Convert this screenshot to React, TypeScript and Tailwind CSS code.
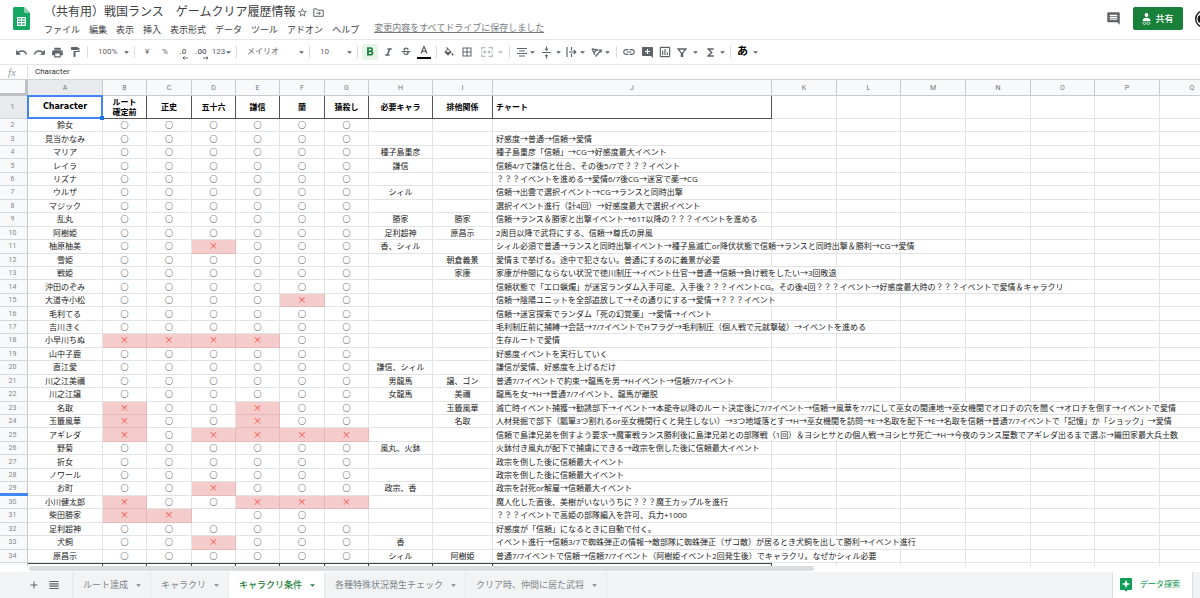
import type { ReactNode } from 'react';
import {
  MdAdd,
  MdBorderAll,
  MdComment,
  MdFormatBold,
  MdFormatItalic,
  MdFormatPaint,
  MdFunctions,
  MdLink,
  MdOutlineInsertChart,
  MdPrint,
  MdRedo,
  MdStarBorder,
  MdStrikethroughS,
  MdUndo,
  MdVerticalAlignCenter,
  MdViewHeadline,
} from 'react-icons/md';

type Row = { name: string; marks: string; need?: string; rival?: string; chart?: string };

// marks: one letter per route column, o = cleared, x = impossible, - = empty
const rows: Row[] = [
  { name: '鈴女', marks: 'oooooo' },
  { name: '見当かなみ', marks: 'oooooo', chart: '好感度→普通→信頼→愛情' },
  { name: 'マリア', marks: 'oooooo', need: '種子島重彦', chart: '種子島重彦「信頼」→CG→好感度最大イベント' },
  { name: 'レイラ', marks: 'oooooo', need: '謙信', chart: '信頼4/7で謙信と仕合、その後5/7で？？？イベント' },
  { name: 'リズナ', marks: 'oooooo', chart: '？？？イベントを進める→愛情6/7後CG→迷宮で薬→CG' },
  { name: 'ウルザ', marks: 'oooooo', need: 'シィル', chart: '信頼→出雲で選択イベント→CG→ランスと同時出撃' },
  { name: 'マジック', marks: 'oooooo', chart: '選択イベント進行（計4回）→好感度最大で選択イベント' },
  { name: '乱丸', marks: 'oooooo', need: '勝家', rival: '勝家', chart: '信頼→ランス＆勝家と出撃イベント→61T以降の？？？イベントを進める' },
  { name: '阿樹姫', marks: 'oooooo', need: '足利超神', rival: '原昌示', chart: '2周目以降で武将にする、信頼→尊氏の屏風' },
  { name: '柚原柚美', marks: 'ooxooo', need: '香、シィル', chart: 'シィル必須で普通→ランスと同時出撃イベント→種子島滅亡or降伏状態で信頼→ランスと同時出撃＆勝利→CG→愛情' },
  { name: '雪姫', marks: 'oooooo', rival: '朝倉義景', chart: '愛情まで挙げる。途中で犯さない。普通にするのに義景が必要' },
  { name: '戦姫', marks: 'oooooo', rival: '家康', chart: '家康が仲間にならない状況で徳川制圧→イベント仕官→普通→信頼→負け戦をしたい→3回敗退' },
  { name: '沖田のぞみ', marks: 'oooooo', chart: '信頼状態で「エロ蝋燭」が迷宮ランダム入手可能、入手後？？？イベントCG。その後4回？？？イベント→好感度最大時の？？？イベントで愛情＆キャラクリ' },
  { name: '大道寺小松', marks: 'ooooxo', chart: '信頼→陰陽ユニットを全部追放して→その通りにする→愛情→？？？イベント' },
  { name: '毛利てる', marks: 'oooooo', chart: '信頼→迷宮探索でランダム「死の幻覚薬」→愛情→イベント' },
  { name: '吉川きく', marks: 'oooooo', chart: '毛利制圧前に捕縛→会話→7/7イベントでHフラグ→毛利制圧（個人戦で元就撃破）→イベントを進める' },
  { name: '小早川ちぬ', marks: 'xxxxoo', chart: '生存ルートで愛情' },
  { name: '山中子鹿', marks: 'oooooo', chart: '好感度イベントを実行していく' },
  { name: '直江愛', marks: 'oooooo', need: '謙信、シィル', chart: '謙信が愛情、好感度を上げるだけ' },
  { name: '川之江美禰', marks: 'oooooo', need: '男龍馬', rival: '譲、ゴン', chart: '普通7/7イベントで約束→龍馬を男→Hイベント→信頼7/7イベント' },
  { name: '川之江譲', marks: 'oooooo', need: '女龍馬', rival: '美禰', chart: '龍馬を女→H→普通7/7イベント、龍馬が離脱' },
  { name: '名取', marks: 'xooxoo', rival: '玉籤風華', chart: '滅亡時イベント捕獲→勧誘部下→イベント→本能寺以降のルート決定後に7/7イベント→信頼→風華を7/7にして巫女の関連地→巫女機関でオロチの穴を聞く→オロチを倒す→イベントで愛情' },
  { name: '玉籤風華', marks: 'xooxoo', rival: '名取', chart: '人材発掘で部下（瓢箪3つ割れるor巫女機関行くと発生しない）→3つ地域落とす→H→巫女機関を訪問→E→名取を配下→E→名取を信頼→普通7/7イベントで「記憶」か「ショック」→愛情' },
  { name: 'アギレダ', marks: 'xoxxxx', chart: '信頼で島津兄弟を倒すよう要求→魔軍戦ランス勝利後に島津兄弟との部隊戦（1回）＆ヨシヒサとの個人戦→ヨシヒサ死亡→H→今夜のランス屋敷でアギレダ出るまで選ぶ→織田家最大兵士数' },
  { name: '野菊', marks: 'oooooo', need: '風丸、火鉢', chart: '火鉢付き風丸が配下で捕虜にできる→政宗を倒した後に信頼最大イベント' },
  { name: '折女', marks: 'oooooo', chart: '政宗を倒した後に信頼最大イベント' },
  { name: 'ノワール', marks: 'oooooo', chart: '政宗を倒した後に信頼最大イベント' },
  { name: 'お町', marks: 'ooxooo', need: '政宗、香', chart: '政宗を討死or解雇→信頼最大イベント' },
  { name: '小川健太郎', marks: 'xooxxx', chart: '魔人化した直後、美樹がいないうちに？？？魔王カップルを進行' },
  { name: '柴田勝家', marks: 'xx-oo-', chart: '？？？イベントで高姫の部隊編入を許可、兵力+1000' },
  { name: '足利超神', marks: 'oooooo', chart: '好感度が「信頼」になるときに自動で付く。' },
  { name: '犬飼', marks: 'ooxooo', need: '香', chart: 'イベント進行→信頼3/7で蜘蛛弾正の情報→敵部隊に蜘蛛弾正（ザコ敵）が居るとき犬飼を出して勝利→イベント進行' },
  { name: '原昌示', marks: 'oooooo', need: 'シィル', rival: '阿樹姫', chart: '普通7/7イベントで信頼→信頼7/7イベント（阿樹姫イベント2回発生後）でキャラクリ。なぜかシィル必要' },
];

const columns = [
  { id: 'A', width: 'w-[75px]' },
  { id: 'B', width: 'w-[44px]' },
  { id: 'C', width: 'w-[45px]' },
  { id: 'D', width: 'w-[44px]' },
  { id: 'E', width: 'w-[44px]' },
  { id: 'F', width: 'w-[45px]' },
  { id: 'G', width: 'w-[44px]' },
  { id: 'H', width: 'w-[64px]' },
  { id: 'I', width: 'w-[60px]' },
  { id: 'J', width: 'w-[279px]' },
  { id: 'K', width: 'w-[65px]' },
  { id: 'L', width: 'w-[64px]' },
  { id: 'M', width: 'w-[65px]' },
  { id: 'N', width: 'w-[65px]' },
  { id: 'O', width: 'w-[64px]' },
  { id: 'P', width: 'w-[65px]' },
  { id: 'Q', width: 'w-[65px]' },
];

const spare = ['K', 'L', 'M', 'N', 'O', 'P', 'Q'];
const menus = ['ファイル', '編集', '表示', '挿入', '表示形式', 'データ', 'ツール', 'アドオン', 'ヘルプ'];
const heads = ['正史', '五十六', '謙信', '蘭', '猿殺し', '必要キャラ', '排他関係'];
const tabs = ['ルート達成', 'キャラクリ', 'キャラクリ条件', '各種特殊状況発生チェック', 'クリア時、仲間に居た武将'];

function Caret() {
  return (
    <svg viewBox="0 0 6 3" className="h-[3px] w-[5px] shrink-0" fill="currentColor" aria-hidden="true">
      <path d="M0 0h6L3 3z" />
    </svg>
  );
}

function Sep() {
  return <span className="mx-[3px] h-3 w-px shrink-0 bg-[#dadce0]" />;
}

function Tool({ label, children }: { label: string; children: ReactNode }) {
  return (
    <button aria-label={label} className="flex h-4 w-[18px] shrink-0 items-center justify-center">
      {children}
    </button>
  );
}

function MenuTool({ label, children }: { label: string; children: ReactNode }) {
  return (
    <button aria-label={label} className="flex h-4 w-[25px] shrink-0 items-center justify-center gap-[3px]">
      {children}
      <Caret />
    </button>
  );
}

function Picker({ label, value, width }: { label: string; value: string; width: string }) {
  return (
    <label className={`flex shrink-0 items-center pl-[7px] pr-[2px] ${width}`}>
      <select aria-label={label} className="min-w-0 flex-1 appearance-none bg-transparent text-[8px] leading-3 outline-none">
        <option>{value}</option>
      </select>
      <Caret />
    </label>
  );
}

function Decimal({ text, d }: { text: string; d: string }) {
  return (
    <span className="relative text-[8px] font-medium leading-3">
      {text}
      <svg viewBox="0 0 6 4" className="absolute -bottom-[2px] -right-[2px] h-1 w-[6px]" fill="none" stroke="currentColor" aria-hidden="true">
        <path d={d} />
      </svg>
    </span>
  );
}

function SheetsLogo() {
  return (
    <svg viewBox="0 0 17 23" className="h-[23px] w-[17px] shrink-0" aria-label="スプレッドシート">
      <path d="M1.5 0H11l6 6v15.5c0 .8-.7 1.5-1.5 1.5h-14C.7 23 0 22.3 0 21.5v-20C0 .7.7 0 1.5 0z" fill="#16a765" />
      <path d="M11 0l6 6h-4.500A1.500 1.500 0 0 1 11 4.500z" fill="#8ed1b1" />
      <path d="M4 10h9v9H4zm1.200 1.300v1.300H8v-1.300zm3.900 0v1.300h2.700v-1.300zM5.200 13.800v1.300H8v-1.300zm3.900 0v1.300h2.700v-1.300zM5.200 16.300v1.400H8v-1.400zm3.900 0v1.400h2.700v-1.400z" fill="#fff" fillRule="evenodd" />
    </svg>
  );
}

function Header() {
  return (
    <header className="flex h-10 shrink-0 border-b border-[#e4e5e7] pl-[13px] pt-[7px]">
      <SheetsLogo />
      <div className="ml-[14px] flex flex-col">
        <div className="-mt-[3px] flex items-center text-[#3c4043]">
          <h1 className="whitespace-nowrap text-[12px] leading-4">（共有用）戦国ランス　ゲームクリア履歴情報</h1>
          <button aria-label="スターを付ける" className="ml-[2px] text-[#5f6368]">
            <MdStarBorder size={11} />
          </button>
          <button aria-label="移動" className="ml-[5px] text-[#5f6368]">
            <svg viewBox="0 0 24 20" className="h-[9px] w-[11px]" fill="none" stroke="currentColor" strokeWidth="2.200" aria-hidden="true">
              <path d="M1.500 2h7l2.500 3h11.500v13.500h-21z" />
              <path d="M7 11.700h9M12.500 8l3.800 3.700-3.800 3.700" />
            </svg>
          </button>
        </div>
        <nav className="mt-1 flex items-center gap-[9px] text-[9px] leading-3 text-[#3c4043]">
          {menus.map((m) => (
            <button key={m} className="whitespace-nowrap">{m}</button>
          ))}
          <a href="#saved" className="-mt-1 ml-[6px] whitespace-nowrap text-[#777b80] underline">
            変更内容をすべてドライブに保存しました
          </a>
        </nav>
      </div>
      <div className="ml-auto flex h-[23px] items-center overflow-hidden">
        <button aria-label="コメント" className="mr-3 text-[#5f6368]">
          <MdComment size={15} />
        </button>
        <button className="flex h-[23px] w-[50px] items-center justify-center gap-1 rounded-[2px] bg-[#188038] text-[9px] font-medium leading-3 text-white">
          <svg viewBox="0 0 9 12" className="h-3 w-[9px]" fill="currentColor" aria-hidden="true">
            <circle cx="4.500" cy="2" r="1.900" />
            <path d="M.5 7.500C.5 5.500 3 4.800 4.500 4.800s4 .7 4 2.700v.5h-8z" />
            <path d="M3.800 9H2.200a1.200 1.200 0 0 0 0 2.400h1.600M5.200 9h1.600a1.200 1.200 0 0 1 0 2.400H5.200M3 10.200h3" fill="none" stroke="currentColor" strokeWidth=".7" />
          </svg>
          共有
        </button>
        <button aria-label="アカウント" className="ml-3 w-[5px] overflow-hidden">
          <svg viewBox="0 0 18 18" className="h-[18px] w-[18px]" aria-hidden="true">
            <circle cx="9" cy="9" r="8.300" fill="#fff" stroke="#111" strokeWidth="1.400" />
            <circle cx="6.500" cy="9" r="4" fill="#111" />
          </svg>
        </button>
      </div>
    </header>
  );
}

function Toolbar() {
  return (
    <div role="toolbar" aria-label="書式" className="flex h-[25px] shrink-0 items-center border-b border-[#e4e5e7] pl-3 text-[8px] leading-3 text-[#5f6368]">
      <Tool label="元に戻す"><MdUndo size={13} /></Tool>
      <Tool label="やり直し"><MdRedo size={13} /></Tool>
      <Tool label="印刷"><MdPrint size={13} /></Tool>
      <Tool label="書式を貼り付け"><MdFormatPaint size={12} /></Tool>
      <Sep />
      <Picker label="ズーム" value="100%" width="w-10" />
      <Sep />
      <Tool label="通貨">¥</Tool>
      <Tool label="パーセント">%</Tool>
      <Tool label="小数点以下を減らす"><Decimal text=".0" d="M6 2H1M2.500.5L1 2l1.500 1.500" /></Tool>
      <Tool label="小数点以下を増やす"><Decimal text=".00" d="M0 2h5M3.500.5L5 2 3.500 3.500" /></Tool>
      <button className="flex w-[23px] shrink-0 items-center justify-center gap-px">123<Caret /></button>
      <Sep />
      <Picker label="フォント" value="メイリオ" width="w-[66px]" />
      <Sep />
      <Picker label="フォントサイズ" value="10" width="w-[41px]" />
      <Sep />
      <Tool label="太字">
        <span className="flex h-4 w-4 items-center justify-center rounded-[2px] bg-[#e6f4ea] text-[#188038]"><MdFormatBold size={14} /></span>
      </Tool>
      <Tool label="斜体"><MdFormatItalic size={13} /></Tool>
      <Tool label="取り消し線"><MdStrikethroughS size={12} /></Tool>
      <Tool label="テキストの色">
        <svg viewBox="0 0 14 14" className="h-[14px] w-[14px]" aria-hidden="true">
          <path d="M4 8.500L7 1.500l3 7M5 6.300h4" fill="none" stroke="currentColor" strokeWidth="1.200" />
          <path d="M0 12h14v2H0z" fill="#000" />
        </svg>
      </Tool>
      <Sep />
      <Tool label="塗りつぶしの色">
        <svg viewBox="0 0 24 20" className="h-[10px] w-[12px]" fill="currentColor" aria-hidden="true">
          <path d="M16.560 8.940L7.620 0 6.210 1.410l2.380 2.380-5.150 5.150a1.490 1.490 0 0 0 0 2.120l5.500 5.500c.29.29.68.44 1.060.44s.77-.15 1.060-.44l5.500-5.500c.59-.58.59-1.530 0-2.120zM5.600 9.500L10 5.100l4.400 4.400zM19 11.500s-2 2.170-2 3.500a2 2 0 0 0 4 0c0-1.330-2-3.500-2-3.500z" />
        </svg>
      </Tool>
      <Tool label="枠線"><MdBorderAll size={12} /></Tool>
      <button aria-label="セルを結合" className="flex h-4 w-[30px] shrink-0 items-center justify-between pl-[5px] pr-[3px] text-[#bdc1c6]">
        <svg viewBox="0 0 12 10" className="h-[10px] w-3" fill="none" stroke="currentColor" strokeWidth="1.200" aria-hidden="true">
          <path d="M.6 3V.6h4M7.400.6h4V3M.6 7v2.400h4M7.400 9.400h4V7M0 5h4.500M7.500 5H12M3.300 3.500L4.800 5 3.300 6.500M8.700 3.500L7.200 5l1.500 1.500" />
        </svg>
        <Caret />
      </button>
      <Sep />
      <MenuTool label="水平方向の配置">
        <svg viewBox="0 0 10 9" className="h-[9px] w-[10px]" fill="none" stroke="currentColor" aria-hidden="true">
          <path d="M0 .5h10M2 3h6M0 5.500h10M2 8h6" />
        </svg>
      </MenuTool>
      <MenuTool label="垂直方向の配置"><MdVerticalAlignCenter size={13} /></MenuTool>
      <MenuTool label="テキストの折り返し">
        <svg viewBox="0 0 11 10" className="h-[10px] w-[11px]" fill="none" stroke="currentColor" strokeWidth="1.200" aria-hidden="true">
          <path d="M1 0v10M5.500 0v3.500M5.500 6.500V10M3 5h6.500M7.800 3L9.800 5 7.800 7" />
        </svg>
      </MenuTool>
      <MenuTool label="テキストの回転">
        <svg viewBox="0 0 11 10" className="h-[10px] w-[11px]" fill="none" stroke="currentColor" strokeWidth="1.200" aria-hidden="true">
          <path d="M1 1.800l6.500 1.400M1 1.800l2.800 6M5.800 2.800L3 5.500M4.500 9.500l5.500-6M7.800 3.200h2.400v2.400" />
        </svg>
      </MenuTool>
      <Sep />
      <Tool label="リンクを挿入"><MdLink size={14} /></Tool>
      <Tool label="コメントを挿入">
        <svg viewBox="0 0 11 11" className="h-[11px] w-[11px]" fill="currentColor" fillRule="evenodd" aria-hidden="true">
          <path d="M1 0h9c.6 0 1 .4 1 1v10L9 9H1c-.6 0-1-.4-1-1V1c0-.6.4-1 1-1zm3.900 2v1.900H3v1.200h1.900V7h1.200V5.100H8V3.900H6.100V2z" />
        </svg>
      </Tool>
      <Tool label="グラフを挿入"><MdOutlineInsertChart size={14} /></Tool>
      <button aria-label="フィルタ" className="flex h-4 w-7 shrink-0 items-center justify-between pl-[3px] pr-1">
        <svg viewBox="0 0 10 9" className="h-[9px] w-[10px]" fill="none" stroke="currentColor" strokeWidth="1.300" aria-hidden="true">
          <path d="M1 1h8L5.600 5.200v3.300H4.400V5.200z" />
        </svg>
        <Caret />
      </button>
      <MenuTool label="関数"><MdFunctions size={13} /></MenuTool>
      <Sep />
      <button aria-label="入力ツール" className="flex h-4 w-7 shrink-0 items-center justify-between pl-[3px] pr-1">
        <span className="text-[11px] font-bold leading-4 text-black">あ</span>
        <Caret />
      </button>
    </div>
  );
}

const line = 'border-r border-b border-[#e2e3e3]';
const headLine = 'border-r border-b border-[#555]';

function RowHead({ n, selected = false, handle = false }: { n: number; selected?: boolean; handle?: boolean }) {
  return (
    <th
      scope="row"
      className={`relative border-b border-r border-b-[#d5d7da] border-r-[#c4c7cb] p-0 pr-[2px] text-center font-['Roboto',sans-serif] text-[7px] font-normal leading-3 text-[#80868b] ${selected ? 'bg-[#e8eaed]' : 'bg-[#f8f9fa]'}`}
    >
      {n}
      {handle && <span className="absolute -bottom-px left-0 h-[3px] w-7 bg-[#4285f4]" />}
    </th>
  );
}

function Mark({ mark }: { mark: string }) {
  if (mark === 'x') {
    return (
      <td className="border-b border-r border-[#e5b9b9] bg-[#f4cccc] p-0 text-center font-['Noto_Sans_CJK_JP',sans-serif] text-[9px] text-[#ff3b30]">
        ×
      </td>
    );
  }
  return <td className={`${line} p-0 text-center font-medium text-black`}>{mark === 'o' ? '○' : ''}</td>;
}

function Sheet() {
  return (
    <main className="min-h-0 flex-1 overflow-hidden">
      <table className="h-full w-[1225px] table-fixed border-separate border-spacing-0 whitespace-nowrap font-['Open_Sans','Noto_Sans_CJK_JP',sans-serif] text-[8px] leading-3 text-[#222]">
        <colgroup>
          <col className="w-7" />
          {columns.map((c) => (
            <col key={c.id} className={c.width} />
          ))}
        </colgroup>
        <thead>
          <tr className="h-4">
            <td className="border-b-[3px] border-r-[3px] border-[#bdc1c6] bg-[#f8f9fa] p-0" />
            {columns.map((c) => (
              <th
                key={c.id}
                scope="col"
                className={`border-b border-r border-[#c9cccf] p-0 text-center font-['Roboto',sans-serif] text-[7px] font-normal text-[#70757a] ${c.id === 'A' ? 'bg-[#e8eaed]' : 'bg-[#f8f9fa]'}`}
              >
                {c.id}
              </th>
            ))}
          </tr>
        </thead>
        <tbody>
          <tr className="h-[23px] font-bold text-black">
            <RowHead n={1} selected />
            <td className={`${headLine} relative p-0 text-center font-['DejaVu_Sans',sans-serif]`}>
              Character
              <span className="absolute -inset-px border-2 border-[#4285f4]" />
              <span className="absolute -bottom-[2px] -right-[2px] h-1 w-1 bg-[#1a73e8]" />
            </td>
            <td className={`${headLine} p-0 text-center leading-[10px]`}>
              ルート
              <br />
              確定前
            </td>
            {heads.map((h) => (
              <td key={h} className={`${headLine} p-0 text-center`}>{h}</td>
            ))}
            <td className={`${headLine} p-0 pl-[3px]`}>チャート</td>
            {spare.map((c) => (
              <td key={c} className={`${line} p-0`} />
            ))}
          </tr>
          {rows.map((r, i) => (
            <tr key={r.name}>
              <RowHead n={i + 2} handle={i === 27} />
              <td className={`${line} p-0 text-center`}>{r.name}</td>
              {r.marks.split('').map((m, k) => (
                <Mark key={k} mark={m} />
              ))}
              <td className={`${line} p-0 text-center`}>{r.need}</td>
              <td className={`${line} p-0 text-center`}>{r.rival}</td>
              <td className={`${line} p-0 pl-[3px]`}>
                {r.chart && <span className="bg-white">{r.chart}</span>}
              </td>
              {spare.map((c) => (
                <td key={c} className={`${line} p-0`} />
              ))}
            </tr>
          ))}
          <tr className="h-[3px]" aria-hidden="true">
            <td className="border-r border-[#c4c7cb] bg-[#f8f9fa] p-0" />
            {columns.map((c, i) => (
              <td key={c.id} className={i < 10 ? 'border-r border-t border-[#444] p-0' : 'border-r border-[#e2e3e3] p-0'} />
            ))}
          </tr>
        </tbody>
      </table>
    </main>
  );
}

function SheetTabs() {
  return (
    <footer className="flex h-[26px] shrink-0 bg-[#f1f3f4] text-[9px] leading-3 text-[#80868b]">
      <div className="flex w-[73px] shrink-0 items-center gap-[7px] border-r border-[#e6e8ea] pl-7 text-[#5f6368]">
        <button aria-label="シートを追加"><MdAdd size={12} /></button>
        <button aria-label="すべてのシート"><MdViewHeadline size={14} /></button>
      </div>
      {tabs.map((t, i) => (
        <button
          key={t}
          className={`flex shrink-0 items-center gap-2 whitespace-nowrap border-r border-[#e6e8ea] pl-[10px] pr-[9px] ${i === 2 ? 'bg-white font-medium text-[#188038]' : ''}`}
        >
          {t}
          <Caret />
        </button>
      ))}
      <button className="ml-auto mr-[7px] flex w-[81px] shrink-0 items-center gap-2 border-x border-[#dadce0] bg-white pl-[7px] text-[8px] font-medium text-[#3aa76d]">
        <svg viewBox="0 0 12 14" className="h-[14px] w-3" aria-hidden="true">
          <path d="M1 0h10c.6 0 1 .4 1 1v10c0 .6-.4 1-1 1H7.500L6 13.800 4.500 12H1c-.6 0-1-.4-1-1V1c0-.6.4-1 1-1z" fill="#0f9d58" />
          <path d="M6 2.500l.9 2.600L9.500 6l-2.600.9L6 9.500l-.9-2.600L2.500 6l2.600-.9z" fill="#fff" stroke="#fff" strokeWidth=".5" />
        </svg>
        データ探索
      </button>
    </footer>
  );
}

export default function App() {
  return (
    <div className="flex h-screen flex-col overflow-hidden bg-white font-['Roboto','Noto_Sans_CJK_JP',sans-serif]">
      <Header />
      <Toolbar />
      <div className="flex h-[15px] shrink-0 items-center border-b border-[#d0d3d6] text-[8px] leading-3">
        <span className="w-7 shrink-0 border-r border-[#dadce0] pl-2 font-['Liberation_Serif',serif] text-[11px] italic text-[#9aa0a6]">fx</span>
        <input aria-label="数式バー" defaultValue="Character" className="min-w-0 flex-1 bg-transparent pl-[7px] text-[#333] outline-none" />
      </div>
      <Sheet />
      <div className="h-[6px] shrink-0 bg-white pl-[29px]">
        <div className="h-[5px] w-[67%] rounded-full bg-[#dadce0]" />
      </div>
      <SheetTabs />
    </div>
  );
}
